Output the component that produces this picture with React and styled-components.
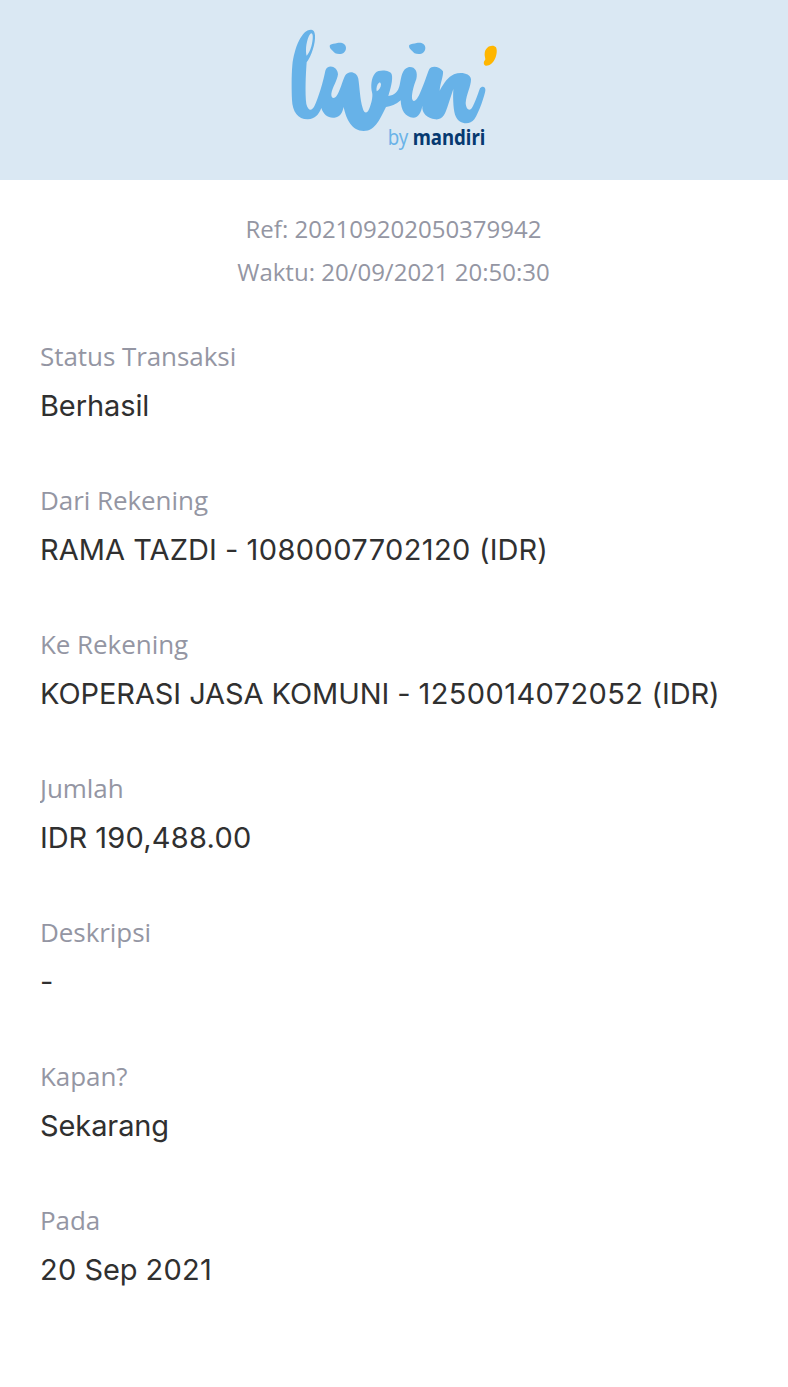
import React from "react";
import styled, { createGlobalStyle } from "styled-components";

const GlobalStyle = createGlobalStyle`
  body {
    margin: 0;
    background: #ffffff;
  }
`;

const Page = styled.div`
  min-height: 1387px;
  font-family: "Inter", sans-serif;
`;

const Header = styled.header`
  height: 180px;
  display: flex;
  justify-content: center;
  align-items: flex-start;
  background: #dae8f3;
`;

const LogoMark = styled.svg`
  width: 228px;
  height: 135px;
  margin-top: 20px;
`;

const Tagline = styled.text`
  font-family: "Noto Sans", sans-serif;
  font-size: 63px;
  font-weight: ${({ $bold }) => ($bold ? 700 : 400)};
  fill: ${({ $bold }) => ($bold ? "#063970" : "#6ab3e8")};
`;

const Meta = styled.div`
  padding: 27px 1px 0 0;
  text-align: center;
  font: 24px/43px "Open Sans", sans-serif;
  color: #9496a3;
`;

const Details = styled.dl`
  margin: 0;
  padding: 43px 40px 0;
`;

const Row = styled.div`
  height: 144px;
`;

const Label = styled.dt`
  overflow: hidden;
  font: 26px/40px "Open Sans", sans-serif;
  letter-spacing: -0.06px;
  color: #9496a3;
`;

const Value = styled.dd`
  margin: 8px 0 0;
  font-size: 29px;
  line-height: 44px;
  letter-spacing: ${({ $tracking = -0.1 }) => $tracking}px;
  color: #303030;
  white-space: nowrap;
`;

const Digits = styled.span`
  letter-spacing: ${({ $long }) => ($long ? 0.4 : 0.25)}px;
`;

const rows = [
  { label: "Status Transaksi", value: "Berhasil" },
  {
    label: "Dari Rekening",
    value: "RAMA TAZDI - 1080007702120 (IDR)",
    tracking: 0.05,
  },
  {
    label: "Ke Rekening",
    value: "KOPERASI JASA KOMUNI - 1250014072052 (IDR)",
    tracking: -0.08,
  },
  { label: "Jumlah", value: "IDR 190,488.00" },
  { label: "Deskripsi", value: "-" },
  { label: "Kapan?", value: "Sekarang" },
  { label: "Pada", value: "20 Sep 2021" },
];

// numbers are set slightly wider than the words around them
const renderValue = (value) =>
  value.split(/(\d[\d,.]*)/).map((part, i) =>
    i % 2 ? (
      <Digits key={i} $long={part.length > 10}>
        {part}
      </Digits>
    ) : (
      part
    )
  );

const Logo = () => (
  <LogoMark viewBox="0 0 684 405" role="img" aria-label="livin' by mandiri">
    <g fill="#67b2e8">
      <path
        fillRule="evenodd"
        d="M94 29 C66 27 43 82 37 136 C34 170 35 210 36 240 C37 275 55 299 84 298
          C105 297 116 284 124 264 C130 284 145 295 163 293 C181 291 187 278 191 261
          C199 300 216 332 251 333 C288 333 302 291 318 261 C331 260 349 253 362 241
          C363 270 375 292 400 293 C416 292 424 276 427 257 C425 280 441 294 466 298
          C490 300 495 281 502 262 L520 207 C518 240 521 276 527 289 C536 312 568 318 583 298
          C598 275 614 226 616 212 C618 200 606 196 600 205 C593 223 580 264 572 268
          C565 272 558 264 557 249 C559 223 573 200 573 178 C571 160 543 155 522 163
          C504 171 493 187 479 212 C481 190 491 166 489 154 C481 141 457 134 448 147
          C440 165 433 191 421 217 C414 235 404 248 398 241 C392 231 400 200 409 177
          C415 154 404 139 387 141 C366 146 364 170 359 195 C355 215 343 226 325 228
          C331 209 340 178 335 163 C330 150 297 148 286 159 C273 174 272 200 276 217
          C280 229 273 255 267 268 C260 284 252 279 248 264 C240 237 239 202 235 176
          C230 153 204 151 195 167 C187 184 180 213 169 229 C161 239 153 233 154 221
          C158 201 172 181 174 163 C173 137 142 131 136 152 C129 187 116 231 103 259
          C94 276 84 271 79 252 C75 221 77 165 80 127 C94 110 107 69 105 46
          C104 35 101 30 94 29 Z
          M94 40 C87 40 78 69 78 91 C78 100 79 105 80 107 C88 100 96 79 98 58
          C99 47 98 41 94 40 Z
          M297 188 C291 193 288 204 290 214 C297 211 303 202 303 193 C302 188 300 187 297 188 Z"
      />
      <path d="M150 75 C156 71 164 72 172 69 C186 66 197 72 198 83 C198 95 189 102 178 102 C168 102 162 98 158 92 C153 88 147 82 150 75 Z" />
      <path d="M388 75 C394 71 402 72 410 69 C424 66 435 72 436 83 C436 95 427 102 416 102 C406 102 400 98 396 92 C391 88 385 82 388 75 Z" />
    </g>
    <path
      fill="#ffb600"
      d="M622 83 C629 76 643 75 648 82 C653 92 649 111 643 120 C637 130 629 138 617 137 C610 135 610 125 615 121 C618 117 613 108 614 101 C614 93 617 87 622 83 Z"
    />
    <Tagline x="323" y="375" textLength="62" lengthAdjust="spacingAndGlyphs">
      by
    </Tagline>
    <Tagline
      $bold
      x="398"
      y="375"
      textLength="218"
      lengthAdjust="spacingAndGlyphs"
    >
      mandiri
    </Tagline>
  </LogoMark>
);

const App = () => (
  <Page>
    <GlobalStyle />
    <Header>
      <Logo />
    </Header>
    <Meta>
      <div>Ref: 202109202050379942</div>
      <div>Waktu: 20/09/2021 20:50:30</div>
    </Meta>
    <Details>
      {rows.map(({ label, value, tracking }) => (
        <Row key={label}>
          <Label>{label}</Label>
          <Value $tracking={tracking}>{renderValue(value)}</Value>
        </Row>
      ))}
    </Details>
  </Page>
);

export default App;
